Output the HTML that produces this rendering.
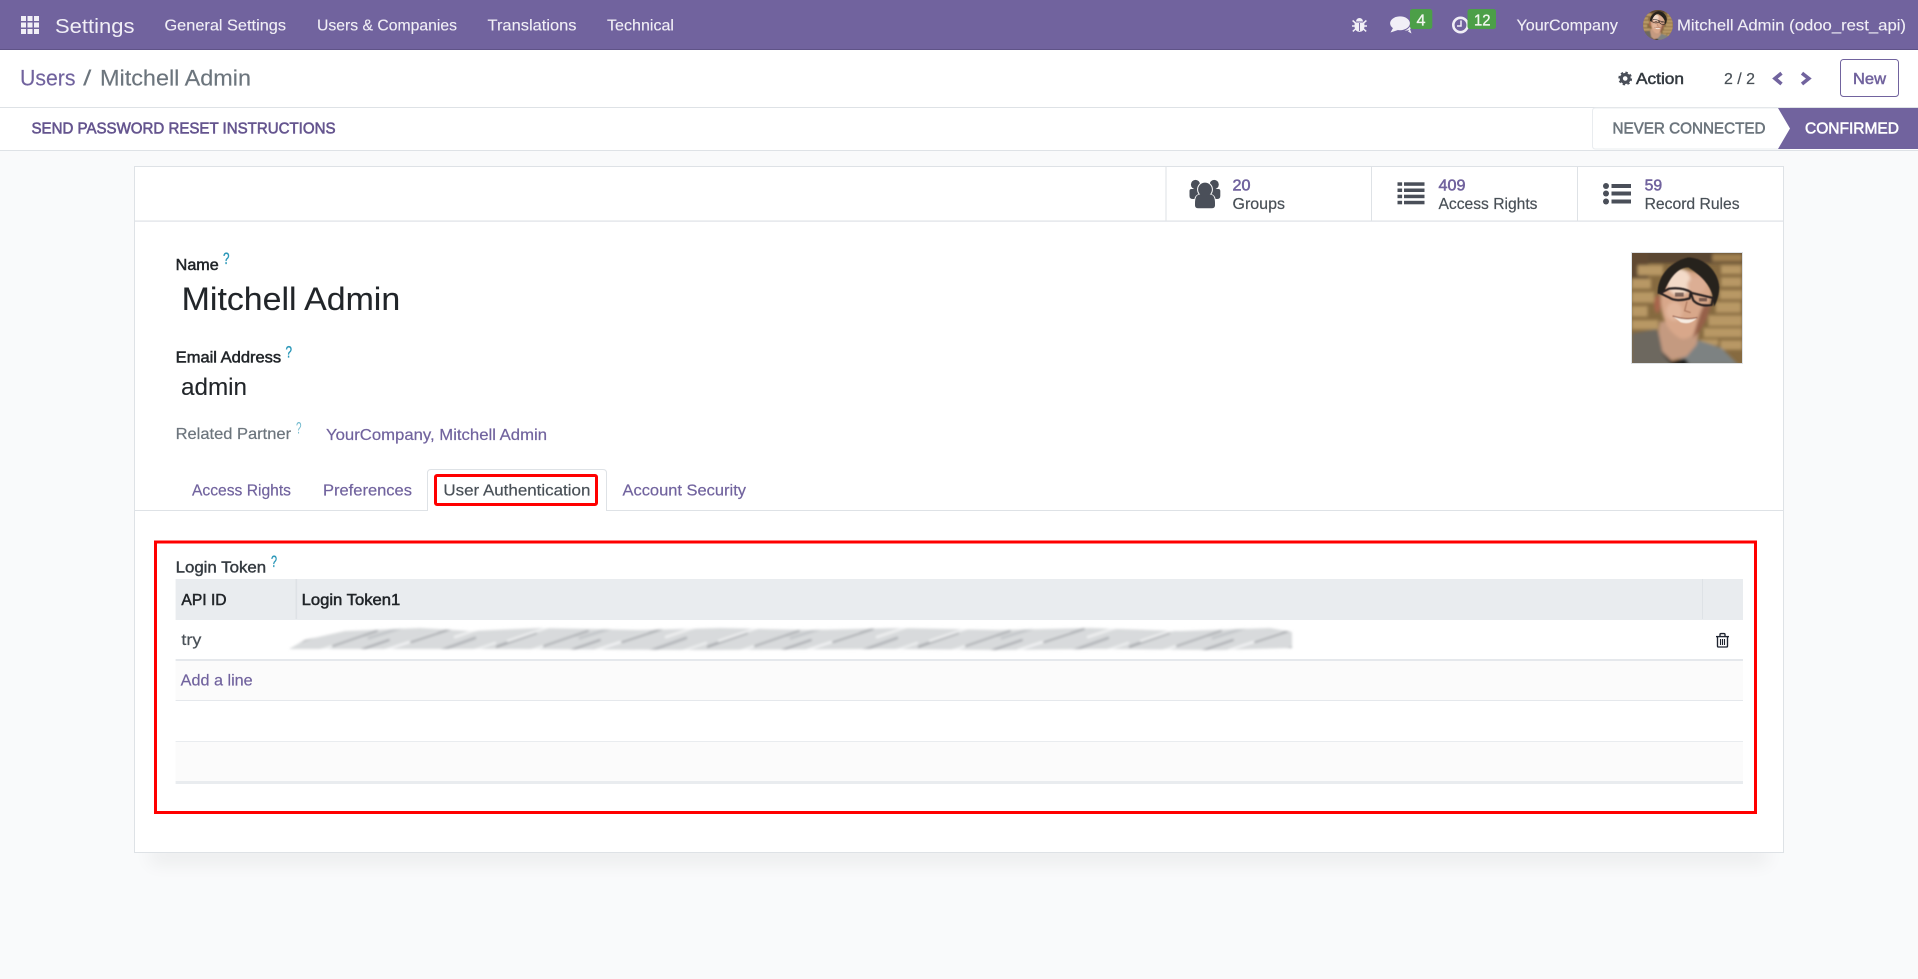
<!DOCTYPE html>
<html lang="en">
<head>
<meta charset="utf-8">
<title>Users / Mitchell Admin</title>
<style>
html,body{margin:0;padding:0;width:1918px;height:979px;overflow:hidden;background:#f9fafb}
svg{display:block;font-family:"Liberation Sans",sans-serif}
.n{font-size:15.9px;fill:#f1eff6;stroke:#f1eff6;stroke-width:.12}
.p{font-size:15.9px;fill:#71639e;stroke:#71639e;stroke-width:.2}
.d{font-size:15.9px;fill:#495057;stroke:#495057;stroke-width:.2}
.g{font-size:15.9px;fill:#6c757d;stroke:#6c757d;stroke-width:.2}
.lb{font-size:15.9px;fill:#212529;stroke:#212529;stroke-width:.5}
.q{font-size:17px;fill:#2a97b8;stroke:#2a97b8;stroke-width:.35}
</style>
</head>
<body>
<svg width="1918" height="979" viewBox="0 0 1918 979" xmlns="http://www.w3.org/2000/svg">
<defs>
<filter id="b1" x="-10%" y="-10%" width="120%" height="120%"><feGaussianBlur stdDeviation="5"/></filter>
<filter id="b2" x="-10%" y="-10%" width="120%" height="120%"><feGaussianBlur stdDeviation="1.6"/></filter>
<filter id="sh" x="-5%" y="-200%" width="110%" height="500%"><feGaussianBlur stdDeviation="9"/></filter>
<filter id="bb" x="-2%" y="-60%" width="104%" height="220%"><feGaussianBlur stdDeviation="1.3"/></filter>
<pattern id="st" x="285" y="626" width="211" height="26" patternUnits="userSpaceOnUse">
<rect width="211" height="26" fill="#d8dadc"/>
<g fill="none" stroke-linecap="round">
<path d="M-6 23 L40 7" stroke="#a4a7ab" stroke-width="2.4"/>
<path d="M12 15 L62 -2" stroke="#f0f1f2" stroke-width="2.4"/>
<path d="M30 26 L78 10" stroke="#eef0f1" stroke-width="2.6"/>
<path d="M48 20 L92 5" stroke="#aaadb1" stroke-width="2"/>
<path d="M72 25 L104 14" stroke="#a0a3a8" stroke-width="1.8"/>
<path d="M84 12 L128 -2" stroke="#c3c6c9" stroke-width="3"/>
<path d="M100 24 L152 7" stroke="#f2f3f4" stroke-width="2.4"/>
<path d="M126 16 L166 3" stroke="#a8abaf" stroke-width="2"/>
<path d="M148 27 L190 12" stroke="#b1b4b8" stroke-width="2.6"/>
<path d="M170 11 L212 -3" stroke="#eff0f1" stroke-width="2.6"/>
<path d="M186 25 L222 13" stroke="#edeff0" stroke-width="2.2"/>
</g>
</pattern>
<clipPath id="band"><path d="M289 649 L305 640 L345 631 L420 628 L470 631 L540 628 L640 630 L720 628 L810 630 L900 628 L1000 630 L1090 628 L1180 631 L1270 628 L1292 632 L1292 648 L1220 650 L1100 649 L1000 650 L880 649 L700 650 L500 649 Z"/></clipPath>
<clipPath id="av"><circle cx="1658" cy="25" r="15"/></clipPath>
<symbol id="photo" viewBox="21 15 330 330">
<rect x="21" y="15" width="330" height="330" fill="#866a40"/>
<g filter="url(#b1)">
<rect x="0" y="0" width="380" height="46" fill="#5a4630"/>
<rect x="0" y="0" width="70" height="110" fill="#604a32"/>
<g fill="#b89865">
<rect x="38" y="52" width="76" height="30"/><rect x="288" y="52" width="62" height="26"/><rect x="288" y="88" width="62" height="28"/>
<rect x="20" y="92" width="58" height="30"/><rect x="20" y="132" width="68" height="32"/><rect x="284" y="126" width="68" height="28"/>
<rect x="20" y="174" width="48" height="32"/><rect x="272" y="162" width="76" height="32"/><rect x="250" y="202" width="102" height="32"/>
<rect x="20" y="216" width="80" height="28"/><rect x="236" y="240" width="116" height="28"/><rect x="226" y="274" width="54" height="18"/><rect x="286" y="277" width="66" height="28"/>
<rect x="262" y="18" width="90" height="22" fill="#a08050"/>
</g>
<path d="M21 256 L95 243 L128 320 L142 350 L21 350 Z" fill="#6d675e"/>
<path d="M215 275 L290 300 L340 350 L150 350 Z" fill="#7d8282"/>
<path d="M105 220 L100 250 L112 310 L140 338 L185 325 L215 290 L225 230 Z" fill="#c49a80"/>
<path d="M108 312 L140 350 L195 350 L180 332 L140 340 Z" fill="#161412"/>
<ellipse cx="97" cy="168" rx="10" ry="27" fill="#a8654c"/>
<path d="M108 125 C102 190 120 250 168 272 C198 278 236 240 254 180 L262 130 L240 78 L155 60 Z" fill="#d8a78a"/>
<ellipse cx="162" cy="102" rx="36" ry="40" fill="#f3dac8"/>
<ellipse cx="215" cy="112" rx="28" ry="24" fill="#dcae94"/>
<ellipse cx="148" cy="190" rx="24" ry="28" fill="#e2b69b"/>
<path d="M258 170 L246 212 L220 255 L203 270 L222 205 L236 170 Z" fill="#96604a"/>
</g>
<g filter="url(#b2)">
<path d="M98 138 C96 90 130 42 190 28 C240 30 280 70 283 118 C282 145 274 165 267 176 L262 140 C252 105 222 78 190 58 C158 58 134 90 118 130 Z" fill="#26211f"/>
<g fill="none" stroke="#2a2422" stroke-width="6.5">
<path d="M106 136 L132 122 C155 119 180 122 197 132 L194 151 C170 159 145 158 133 149 Z"/>
<path d="M197 134 L264 150 L260 171 C240 175 216 171 205 157 Z"/>
</g>
<path d="M150 134 h26 v12 h-26 Z M222 150 h24 v10 h-24 Z" fill="#5a4038" opacity=".75"/>
<path d="M145 206 Q180 220 215 211 Q195 232 167 223 Z" fill="#f6ebe1"/>
<path d="M143 204 Q180 217 217 209" stroke="#7a3d2e" stroke-width="3" fill="none" opacity=".8"/>
<path d="M186 160 L179 188 L197 194" stroke="#a87258" stroke-width="4" fill="none" opacity=".8"/>
</g>
</symbol>
</defs>

<!-- page -->
<rect width="1918" height="979" fill="#f9fafb"/>

<!-- navbar -->
<rect width="1918" height="49" fill="#71639e"/>
<rect y="49" width="1918" height="1" fill="#5f5387"/>
<g fill="#f1eff6">
<rect x="21" y="16" width="5" height="5"/><rect x="27.5" y="16" width="5" height="5"/><rect x="34" y="16" width="5" height="5"/>
<rect x="21" y="22.5" width="5" height="5"/><rect x="27.5" y="22.5" width="5" height="5"/><rect x="34" y="22.5" width="5" height="5"/>
<rect x="21" y="29" width="5" height="5"/><rect x="27.5" y="29" width="5" height="5"/><rect x="34" y="29" width="5" height="5"/>
</g>
<text x="55" y="33" font-size="20" fill="#f1eff6" textLength="79.5" lengthAdjust="spacingAndGlyphs">Settings</text>
<text class="n" x="164.5" y="30.5" textLength="121.5" lengthAdjust="spacingAndGlyphs">General Settings</text>
<text class="n" x="317" y="30.5" textLength="140" lengthAdjust="spacingAndGlyphs">Users &amp; Companies</text>
<text class="n" x="487.5" y="30.5" textLength="89" lengthAdjust="spacingAndGlyphs">Translations</text>
<text class="n" x="607" y="30.5" textLength="67" lengthAdjust="spacingAndGlyphs">Technical</text>

<!-- bug -->
<g fill="#f1eff6">
<path d="M1356 21.5 a3.5 3.5 0 0 1 7 0 Z"/>
<path d="M1354.6 22.5 H1364.4 V27 a4.9 4.9 0 0 1 -9.8 0 Z"/>
</g>
<g stroke="#f1eff6" stroke-width="1.5" fill="none">
<path d="M1355.5 23 L1352.6 20.5 M1363.5 23 L1366.4 20.5 M1355 26 H1352 M1364 26 H1367 M1355.5 29 L1352.8 31.4 M1363.5 29 L1366.2 31.4"/>
</g>
<rect x="1359.1" y="23" width=".9" height="8" fill="#71639e"/>

<!-- comments -->
<path d="M1396 29 Q1411 33 1411 27 Q1411 25 1407 22 L1400 24 Z" fill="#f1eff6"/>
<path d="M1408 31.5 L1411.5 33.5 L1410 29 Z" fill="#f1eff6"/>
<ellipse cx="1400" cy="23.3" rx="10.4" ry="7.4" fill="#f1eff6" stroke="#71639e" stroke-width="1"/>
<path d="M1393 28 L1390.5 32.5 L1398 30 Z" fill="#f1eff6"/>
<rect x="1410" y="9" width="22.3" height="20" rx="2.5" fill="#4c9f48"/>
<text x="1416.5" y="25.5" font-size="15.5" fill="#f1f6ef" stroke="#f1f6ef" stroke-width=".35" textLength="9" lengthAdjust="spacingAndGlyphs">4</text>

<!-- clock -->
<circle cx="1460.5" cy="25" r="7.2" fill="none" stroke="#f1eff6" stroke-width="2.6"/>
<path d="M1461 20.5 V26 H1457" fill="none" stroke="#f1eff6" stroke-width="1.5"/>
<rect x="1467.5" y="9" width="28.5" height="20" rx="2.5" fill="#4c9f48"/>
<text x="1474" y="25.5" font-size="15.5" fill="#f1f6ef" stroke="#f1f6ef" stroke-width=".35" textLength="16.5" lengthAdjust="spacingAndGlyphs">12</text>

<text class="n" x="1516.5" y="30.5" textLength="101.5" lengthAdjust="spacingAndGlyphs">YourCompany</text>
<g clip-path="url(#av)"><use href="#photo" x="1643" y="10" width="30" height="30"/></g>
<text class="n" x="1677" y="30.5" textLength="229" lengthAdjust="spacingAndGlyphs">Mitchell Admin (odoo_rest_api)</text>

<!-- control panel -->
<rect y="50" width="1918" height="57" fill="#fff"/>
<rect y="107" width="1918" height="1" fill="#dee2e6"/>
<text x="20" y="85.5" font-size="22" fill="#71639e" stroke="#71639e" stroke-width=".15" textLength="55.5" lengthAdjust="spacingAndGlyphs">Users</text>
<text x="83" y="85.5" font-size="22" fill="#6c757d" textLength="8.5" lengthAdjust="spacingAndGlyphs">/</text>
<text x="100" y="85.5" font-size="22" fill="#6c757d" stroke="#6c757d" stroke-width=".15" textLength="151" lengthAdjust="spacingAndGlyphs">Mitchell Admin</text>

<circle cx="1625.2" cy="78.5" r="3.9" fill="none" stroke="#4a4f59" stroke-width="3.2"/>
<circle cx="1625.2" cy="78.5" r="6" fill="none" stroke="#4a4f59" stroke-width="1.8" stroke-dasharray="2.4 2.31"/>
<text x="1636" y="84" font-size="15.9" fill="#343a40" stroke="#343a40" stroke-width=".5" textLength="48" lengthAdjust="spacingAndGlyphs">Action</text>
<text class="d" x="1724" y="84" textLength="31" lengthAdjust="spacingAndGlyphs">2 / 2</text>
<path d="M1781.5 73.2 L1775 78.5 L1781.5 84" fill="none" stroke="#71639e" stroke-width="3.6"/>
<path d="M1802 73.2 L1808.8 78.5 L1802 84" fill="none" stroke="#71639e" stroke-width="3.6"/>
<rect x="1840.5" y="59.5" width="58" height="37" rx="3" fill="#fff" stroke="#71639e"/>
<text x="1853" y="84" font-size="15.9" fill="#71639e" stroke="#71639e" stroke-width=".5" textLength="33" lengthAdjust="spacingAndGlyphs">New</text>

<!-- status bar -->
<rect y="108" width="1918" height="42" fill="#fff"/>
<rect y="150" width="1918" height="1" fill="#dee2e6"/>
<text x="31.5" y="133.5" font-size="15.9" fill="#65558f" stroke="#65558f" stroke-width=".6" textLength="304" lengthAdjust="spacingAndGlyphs">SEND PASSWORD RESET INSTRUCTIONS</text>
<path d="M1790 108 H1595.5 q-3 0 -3 3 V146 q0 3 3 3 H1790" fill="#fff" stroke="#e9ecef"/>
<path d="M1778 108 H1918 V149 H1778 L1790 128.5 Z" fill="#71639e"/>
<text x="1612.5" y="133.5" font-size="15.9" fill="#6c757d" stroke="#6c757d" stroke-width=".55" textLength="153" lengthAdjust="spacingAndGlyphs">NEVER CONNECTED</text>
<text x="1805" y="133.5" font-size="15.9" fill="#fff" stroke="#fff" stroke-width=".55" textLength="94" lengthAdjust="spacingAndGlyphs">CONFIRMED</text>

<!-- sheet -->
<rect x="150" y="846" width="1618" height="18" fill="#000" opacity=".055" filter="url(#sh)"/>
<rect x="134.5" y="166.5" width="1649" height="686" fill="#fff" stroke="#dee2e6"/>
<rect x="135" y="220.5" width="1648" height="1.2" fill="#dee2e6"/>
<rect x="1165.5" y="167" width="1" height="54" fill="#dee2e6"/>
<rect x="1371" y="167" width="1" height="54" fill="#dee2e6"/>
<rect x="1577" y="167" width="1" height="54" fill="#dee2e6"/>

<!-- groups -->
<circle cx="1195.5" cy="184.5" r="4.6" fill="#4a4f59"/><circle cx="1214.2" cy="184.5" r="4.6" fill="#4a4f59"/>
<path d="M1189.5 191 q0 -2 2 -2 H1199 L1198 199 H1193 q-3.5 0 -3.5 -3 Z" fill="#4a4f59"/>
<path d="M1220.3 191 q0 -2 -2 -2 H1211 L1212 199 H1217 q3.3 0 3.3 -3 Z" fill="#4a4f59"/>
<circle cx="1205" cy="189.5" r="7.9" fill="#fff"/>
<path d="M1194 203 q0 -8 5 -9 h12 q5 1 5 9 v2.5 q0 3.5 -4 3.8 h-14 q-4 -.3 -4 -3.8 Z" fill="#fff"/>
<path d="M1195 203 q0 -8 4.5 -8.5 h11 q4.5 .5 4.5 8.5 v2.5 q0 2.8 -3.5 2.8 h-13 q-3.5 0 -3.5 -2.8 Z" fill="#4a4f59"/>
<circle cx="1205" cy="189.5" r="6.9" fill="#4a4f59"/>
<text x="1232.5" y="190.5" font-size="15.9" fill="#71639e" stroke="#71639e" stroke-width=".55" textLength="18" lengthAdjust="spacingAndGlyphs">20</text>
<text class="d" x="1232.5" y="209" textLength="52.5" lengthAdjust="spacingAndGlyphs">Groups</text>

<!-- access rights -->
<g fill="#4a4f59">
<rect x="1397.5" y="182.3" width="4.6" height="3.5"/><rect x="1404" y="182.3" width="20.5" height="3.5"/>
<rect x="1397.5" y="188.5" width="4.6" height="3.5"/><rect x="1404" y="188.5" width="20.5" height="3.5"/>
<rect x="1397.5" y="194.7" width="4.6" height="3.5"/><rect x="1404" y="194.7" width="20.5" height="3.5"/>
<rect x="1397.5" y="200.8" width="4.6" height="3.5"/><rect x="1404" y="200.8" width="20.5" height="3.5"/>
</g>
<text x="1438.5" y="190.5" font-size="15.9" fill="#71639e" stroke="#71639e" stroke-width=".55" textLength="27" lengthAdjust="spacingAndGlyphs">409</text>
<text class="d" x="1438.5" y="209" textLength="99" lengthAdjust="spacingAndGlyphs">Access Rights</text>

<!-- record rules -->
<g fill="#4a4f59">
<circle cx="1606" cy="186" r="3"/><rect x="1611.5" y="184" width="19.5" height="4"/>
<circle cx="1606" cy="193.5" r="3"/><rect x="1611.5" y="191.5" width="19.5" height="4"/>
<circle cx="1606" cy="201.5" r="3"/><rect x="1611.5" y="199.5" width="19.5" height="4"/>
</g>
<text x="1644.6" y="190.5" font-size="15.9" fill="#71639e" stroke="#71639e" stroke-width=".55" textLength="17.5" lengthAdjust="spacingAndGlyphs">59</text>
<text class="d" x="1644.6" y="209" textLength="95" lengthAdjust="spacingAndGlyphs">Record Rules</text>

<!-- photo -->
<rect x="1631.5" y="252.5" width="111" height="111" fill="#fff" stroke="#dee2e6"/>
<use href="#photo" x="1632" y="253" width="110" height="110"/>

<!-- fields -->
<text class="lb" x="175.7" y="270" textLength="43" lengthAdjust="spacingAndGlyphs">Name</text>
<text class="q" x="223" y="264" textLength="6.5" lengthAdjust="spacingAndGlyphs">?</text>
<text x="181.7" y="310" font-size="32.5" fill="#212529" stroke="#212529" stroke-width=".1" textLength="218.5" lengthAdjust="spacingAndGlyphs">Mitchell Admin</text>
<text class="lb" x="175.7" y="362.7" textLength="105.5" lengthAdjust="spacingAndGlyphs">Email Address</text>
<text class="q" x="285.5" y="357.5" textLength="6.5" lengthAdjust="spacingAndGlyphs">?</text>
<text x="181" y="395" font-size="24" fill="#212529" stroke="#212529" stroke-width=".1" textLength="66" lengthAdjust="spacingAndGlyphs">admin</text>
<text class="g" x="175.6" y="439" textLength="115.5" lengthAdjust="spacingAndGlyphs">Related Partner</text>
<text x="296" y="433.5" font-size="16.5" fill="#6fb8cc" textLength="5.5" lengthAdjust="spacingAndGlyphs">?</text>
<text class="p" x="326" y="440" textLength="221" lengthAdjust="spacingAndGlyphs">YourCompany, Mitchell Admin</text>

<!-- tabs -->
<rect x="135" y="510" width="1648" height="1" fill="#dee2e6"/>
<path d="M427.5 511 V473 q0 -3.5 3.5 -3.5 H603 q3.5 0 3.5 3.5 V511" fill="#fff" stroke="#dee2e6"/>
<rect x="428" y="510" width="178" height="1.2" fill="#fff"/>
<text class="p" x="192" y="495.5" textLength="99" lengthAdjust="spacingAndGlyphs">Access Rights</text>
<text class="p" x="323" y="495.5" textLength="89" lengthAdjust="spacingAndGlyphs">Preferences</text>
<text class="d" x="443.4" y="495.5" textLength="147" lengthAdjust="spacingAndGlyphs">User Authentication</text>
<text class="p" x="622.5" y="495.5" textLength="123.5" lengthAdjust="spacingAndGlyphs">Account Security</text>
<rect x="435.5" y="475.5" width="161" height="29" rx="1.5" fill="none" stroke="#f00" stroke-width="3"/>

<!-- login token -->
<text x="175.6" y="572.7" font-size="15.9" fill="#343a40" stroke="#343a40" stroke-width=".4" textLength="90.5" lengthAdjust="spacingAndGlyphs">Login Token</text>
<text class="q" x="271" y="567" textLength="6" lengthAdjust="spacingAndGlyphs">?</text>

<rect x="175.6" y="579" width="1567.4" height="41" fill="#e9ecef"/>
<rect x="295.5" y="579" width="1.6" height="40" fill="#dee2e6"/>
<rect x="1702" y="579" width="1" height="40" fill="#dee2e6"/>
<text class="lb" x="181.4" y="605" textLength="45.2" lengthAdjust="spacingAndGlyphs">API ID</text>
<text class="lb" x="301.6" y="605" textLength="98.7" lengthAdjust="spacingAndGlyphs">Login Token1</text>

<text class="d" x="181.4" y="645" textLength="20" lengthAdjust="spacingAndGlyphs">try</text>
<g filter="url(#bb)"><g clip-path="url(#band)"><rect x="280" y="622" width="1020" height="34" fill="url(#st)"/></g></g>

<!-- trash -->
<g fill="none" stroke="#1e2430" stroke-width="1.35">
<path d="M1716 636.6 H1729"/>
<path d="M1720 636.4 V634.6 q0 -1 1 -1 H1724 q1 0 1 1 V636.4"/>
<path d="M1717.5 636.6 V646 q0 1 1 1 H1726.5 q1 0 1 -1 V636.6"/>
<path d="M1720.5 639 V645 M1722.5 639 V645 M1724.5 639 V645" stroke-width="1.1"/>
</g>

<rect x="175.6" y="659" width="1567.4" height="2" fill="#e5e8ec"/>
<rect x="175.6" y="661" width="1567.4" height="39" fill="#fbfbfb"/>
<rect x="175.6" y="700" width="1567.4" height="1" fill="#e5e8ec"/>
<text class="p" x="180.7" y="685.7" textLength="72" lengthAdjust="spacingAndGlyphs">Add a line</text>
<rect x="175.6" y="741" width="1567.4" height="1" fill="#e9ecef"/>
<rect x="175.6" y="742" width="1567.4" height="39" fill="#fbfbfb"/>
<rect x="175.6" y="781" width="1567.4" height="3" fill="#e9ecef"/>

<rect x="155.5" y="542" width="1600" height="270.5" fill="none" stroke="#f00" stroke-width="3"/>
</svg>
</body>
</html>
